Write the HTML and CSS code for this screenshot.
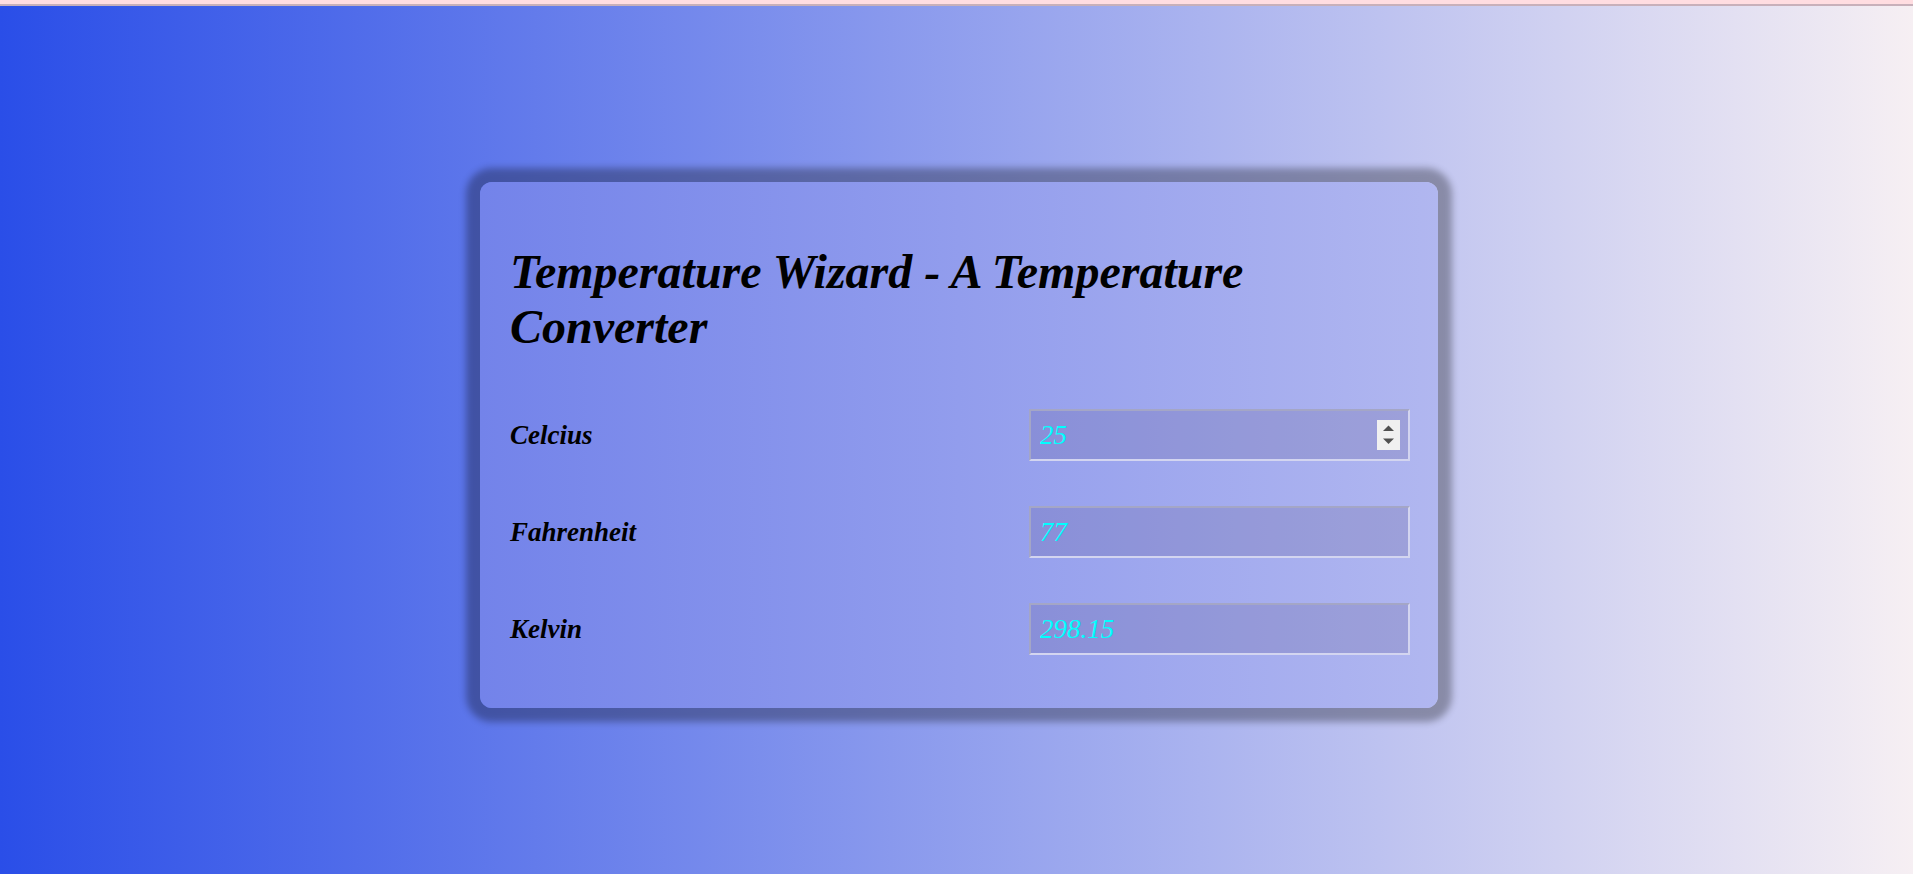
FILE: index.html
```html
<!DOCTYPE html>
<html lang="en">
<head>
<meta charset="utf-8">
<title>Temperature Wizard</title>
<link rel="stylesheet" href="styles.css">
</head>
<body>
<div class="topbar"></div>
<main class="page">
  <section class="card">
    <h1 class="title">Temperature Wizard - A Temperature Converter</h1>
    <form class="fields">
      <div class="row">
        <label class="label" for="c">Celcius</label>
        <span class="field-wrap">
          <input class="field" id="c" type="text" value="25">
          <span class="spin">
            <svg width="23" height="30" viewBox="0 0 23 30"><polygon points="6,11 11.5,5.5 17,11" fill="#505050"/><polygon points="6,18.5 17,18.5 11.5,24" fill="#505050"/></svg>
          </span>
        </span>
      </div>
      <div class="row">
        <label class="label" for="f">Fahrenheit</label>
        <span class="field-wrap"><input class="field" id="f" type="text" value="77"></span>
      </div>
      <div class="row">
        <label class="label" for="k">Kelvin</label>
        <span class="field-wrap"><input class="field" id="k" type="text" value="298.15"></span>
      </div>
    </form>
  </section>
</main>
</body>
</html>
```

FILE: styles.css
```css
html, body {
  margin: 0;
  padding: 0;
}
body {
  font-family: "Liberation Serif", "Times New Roman", serif;
  height: 874px;
  overflow: hidden;
  display: flex;
  flex-direction: column;
  background: linear-gradient(to right, #2a4ee8, #f6eff3);
}
.topbar {
  height: 4px;
  background: #ffdde1;
  border-bottom: 2px solid #c8b0ba;
  flex: none;
}
.page {
  flex: 1;
  display: flex;
  justify-content: center;
  align-items: flex-start;
  padding-top: 176px;
  padding-left: 5px;
}
.card {
  width: 958px;
  box-sizing: border-box;
  padding: 30px 28px 30px 30px;
  border-radius: 12px;
  background: linear-gradient(to right, #7383ea, #b1b7f0);
  box-shadow: 0 0 7px 14px rgba(0, 0, 0, 0.3);
}
.title {
  margin: 32px 0;
  font-size: 48px;
  font-weight: bold;
  font-style: italic;
  line-height: normal;
  color: #000;
}
.fields {
  display: flex;
  flex-direction: column;
  gap: 45px;
  padding: 23px 0;
  margin: 0;
}
.row {
  display: flex;
  align-items: center;
  justify-content: space-between;
}
.label {
  font-size: 27px;
  font-weight: bold;
  font-style: italic;
  color: #000;
}
.field-wrap {
  position: relative;
  display: block;
  width: 381px;
  height: 52px;
}
.field {
  box-sizing: border-box;
  width: 381px;
  height: 52px;
  margin: 0;
  padding: 0 9px;
  border: 2px solid;
  border-color: #a4a6c6 #d3d5f0 #d3d5f0 #a4a6c6;
  background: rgba(70, 60, 110, 0.17);
  font-family: "Liberation Serif", "Times New Roman", serif;
  font-style: italic;
  font-size: 27px;
  color: #00ffff;
  outline: none;
}
.spin {
  position: absolute;
  right: 10px;
  top: 11px;
  width: 23px;
  height: 30px;
  background: #f0f0f0;
  display: block;
}
.spin svg {
  display: block;
}
```
